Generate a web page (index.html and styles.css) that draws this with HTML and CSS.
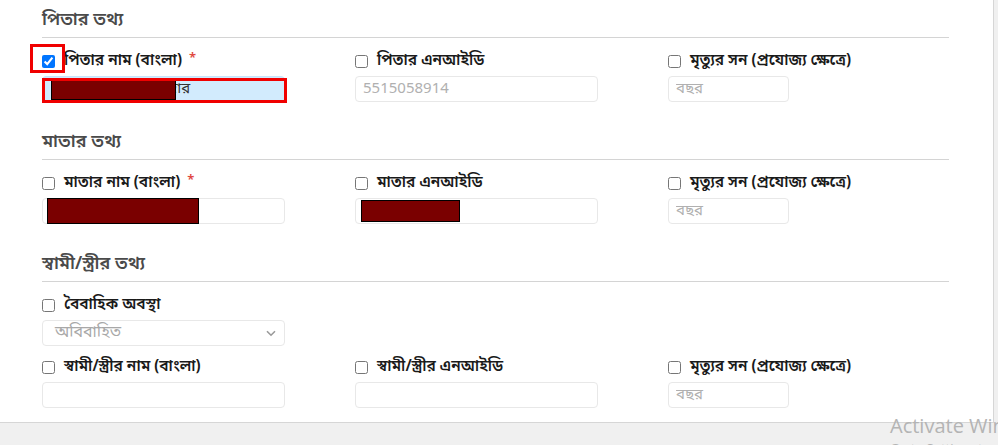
FILE: index.html
```html
<!DOCTYPE html>
<html lang="bn">
<head>
<meta charset="utf-8">
<title>তথ্য</title>
<link rel="stylesheet" href="styles.css">
</head>
<body>
<div class="page">
  <div class="card">
    <section class="section s-father">
      <h3 class="sec-title">পিতার তথ্য</h3>
      <div class="row">
        <div class="col">
          <label class="chk"><input type="checkbox" checked><span>পিতার নাম (বাংলা)</span><span class="req">*</span></label>
          <div class="field-wrap">
            <input class="field field-filled" type="text" value="দার">
            <span class="redact r-father"></span>
          </div>
        </div>
        <div class="col">
          <label class="chk"><input type="checkbox"><span>পিতার এনআইডি</span></label>
          <input class="field" type="text" placeholder="5515058914">
        </div>
        <div class="col">
          <label class="chk"><input type="checkbox"><span>মৃত্যুর সন (প্রযোজ্য ক্ষেত্রে)</span></label>
          <input class="field field-year" type="text" placeholder="বছর">
        </div>
      </div>
    </section>

    <section class="section">
      <h3 class="sec-title">মাতার তথ্য</h3>
      <div class="row">
        <div class="col">
          <label class="chk"><input type="checkbox"><span>মাতার নাম (বাংলা)</span><span class="req">*</span></label>
          <div class="field-wrap">
            <input class="field" type="text">
            <span class="redact r-mother"></span>
          </div>
        </div>
        <div class="col">
          <label class="chk"><input type="checkbox"><span>মাতার এনআইডি</span></label>
          <div class="field-wrap">
            <input class="field" type="text">
            <span class="redact r-mother-nid"></span>
          </div>
        </div>
        <div class="col">
          <label class="chk"><input type="checkbox"><span>মৃত্যুর সন (প্রযোজ্য ক্ষেত্রে)</span></label>
          <input class="field field-year" type="text" placeholder="বছর">
        </div>
      </div>
    </section>

    <section class="section">
      <h3 class="sec-title">স্বামী/স্ত্রীর তথ্য</h3>
      <div class="row">
        <div class="col">
          <label class="chk"><input type="checkbox"><span>বৈবাহিক অবস্থা</span></label>
          <div class="select">
            <span>অবিবাহিত</span>
            <svg class="chev" width="10" height="7" viewBox="0 0 10 7"><path d="M1 1.2 L5 5.2 L9 1.2" fill="none" stroke="#9a9a9a" stroke-width="1.6"/></svg>
          </div>
        </div>
      </div>
      <div class="row row-2">
        <div class="col">
          <label class="chk"><input type="checkbox"><span>স্বামী/স্ত্রীর নাম (বাংলা)</span></label>
          <input class="field" type="text">
        </div>
        <div class="col">
          <label class="chk"><input type="checkbox"><span>স্বামী/স্ত্রীর এনআইডি</span></label>
          <input class="field" type="text">
        </div>
        <div class="col">
          <label class="chk"><input type="checkbox"><span>মৃত্যুর সন (প্রযোজ্য ক্ষেত্রে)</span></label>
          <input class="field field-year" type="text" placeholder="বছর">
        </div>
      </div>
    </section>
  </div>

  <span class="mark mark-check"></span>
  <span class="mark mark-input"></span>

  <div class="watermark">
    <div class="wm-1">Activate Windows</div>
    <div class="wm-2">Go to Settings to activate Windows.</div>
  </div>
</div>
</body>
</html>
```

FILE: styles.css
```css
html, body {
  margin: 0;
  padding: 0;
}
body {
  background: #f0f0f0;
  font-family: "Noto Sans Bengali", "Noto Sans", "Liberation Sans", sans-serif;
  color: #222;
  overflow: hidden;
}
.page {
  position: relative;
  width: 998px;
  height: 445px;
  overflow: hidden;
}
.card {
  box-sizing: border-box;
  width: 994px;
  height: 423px;
  background: #fff;
  border-right: 1px solid #d6d6d6;
  border-bottom: 1px solid #d6d6d6;
  padding: 7px 0 0 42px;
}
.section {
  width: 907px;
  margin-bottom: 27px;
}
.sec-title {
  margin: 0;
  font-size: 18px;
  line-height: 26px;
  height: 26px;
  font-weight: 600;
  color: #4a4a4a;
  padding-bottom: 4px;
  border-bottom: 1px solid #d4d4d4;
}
.row {
  display: grid;
  grid-template-columns: 313px 313px 281px;
  margin-top: 13px;
}
.row-2 {
  margin-top: 11px;
}
.col {
  display: flex;
  flex-direction: column;
  align-items: flex-start;
}
.chk {
  display: flex;
  align-items: center;
  height: 20px;
  margin-bottom: 5px;
  font-size: 15.5px;
  font-weight: 600;
  color: #1a1a1a;
  white-space: nowrap;
}
.chk input {
  width: 13px;
  height: 13px;
  margin: 0 9px 0 0;
  accent-color: #0075ff;
}
.req {
  color: #e0473f;
  margin-left: 7px;
  font-size: 13px;
  align-self: flex-start;
  line-height: 16px;
}
.field-wrap {
  position: relative;
}
.field {
  box-sizing: border-box;
  width: 243px;
  height: 26px;
  margin: 0;
  border: 1px solid #e8e8e8;
  border-radius: 4px;
  background: #fff;
  padding: 0 7px;
  font-family: "Noto Sans Bengali", "Noto Sans", "Liberation Sans", sans-serif;
  font-size: 15px;
  color: #333;
  outline: none;
}
.field::placeholder {
  color: #b0b0b0;
}
.field-year {
  width: 121px;
}
.field-filled {
  background: #d2ebfd;
  border-color: #c7e4fb;
  padding-left: 126px;
}
.redact {
  position: absolute;
  box-sizing: border-box;
  background: #7a0000;
  border: 1px solid #000;
}
.r-father {
  left: 9px;
  top: 3px;
  width: 125px;
  height: 21px;
}
.r-mother {
  left: 5px;
  top: 0;
  width: 152px;
  height: 26px;
}
.r-mother-nid {
  left: 6px;
  top: 2px;
  width: 99px;
  height: 22px;
}
.select {
  box-sizing: border-box;
  width: 243px;
  height: 26px;
  border: 1px solid #e8e8e8;
  border-radius: 4px;
  display: flex;
  align-items: center;
  justify-content: space-between;
  padding: 0 8px 0 12px;
  font-size: 16px;
  color: #a8a8a8;
}
.chev {
  display: block;
}
.mark {
  position: absolute;
  box-sizing: border-box;
  border: 3px solid #f00000;
}
.mark-check {
  left: 30px;
  top: 44px;
  width: 35px;
  height: 29px;
}
.mark-input {
  left: 42px;
  top: 78px;
  width: 245px;
  height: 25px;
}
.watermark {
  position: absolute;
  left: 890px;
  top: 413px;
  font-family: "Open Sans", "Noto Sans", sans-serif;
  color: #b4b4b4;
  white-space: nowrap;
}
.wm-1 {
  font-size: 20px;
  line-height: 26px;
}
.wm-2 {
  font-size: 13px;
  line-height: 18px;
}
```
